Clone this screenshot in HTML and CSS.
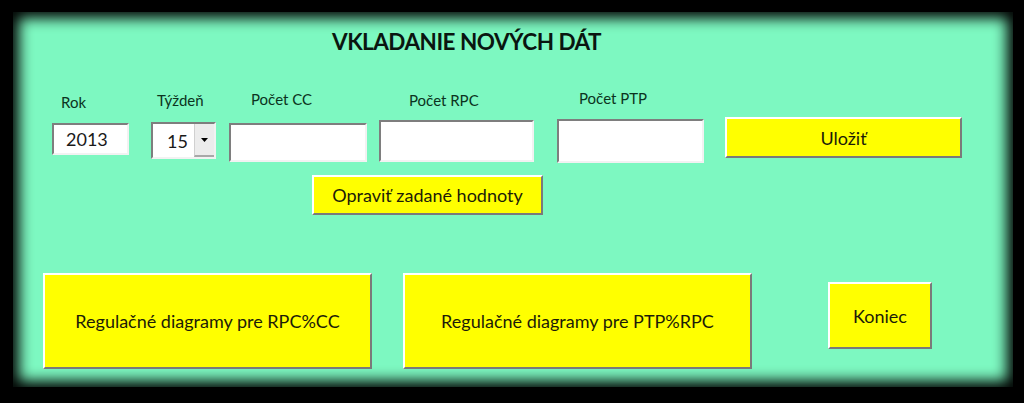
FILE: index.html
```html
<!DOCTYPE html>
<html lang="sk">
<head>
<meta charset="utf-8">
<title>Vkladanie nových dát</title>
<link rel="stylesheet" href="styles.css">
</head>
<body>
<div class="panel">
  <h1 class="title">VKLADANIE NOVÝCH DÁT</h1>

  <div class="fields">
    <div class="field f-rok">
      <span class="label">Rok</span>
      <div class="box">2013</div>
    </div>
    <div class="field f-week">
      <span class="label">Týždeň</span>
      <div class="box combo">
        <span class="combo-value">15</span>
        <span class="combo-btn"><svg width="7" height="4" viewBox="0 0 7 4"><path d="M0 0h7L3.5 4z" fill="#000"/></svg></span>
      </div>
    </div>
    <div class="field f-cc">
      <span class="label">Počet CC</span>
      <div class="box"></div>
    </div>
    <div class="field f-rpc">
      <span class="label">Počet RPC</span>
      <div class="box"></div>
    </div>
    <div class="field f-ptp">
      <span class="label">Počet PTP</span>
      <div class="box"></div>
    </div>
    <button class="btn btn-save">Uložiť</button>
  </div>

  <button class="btn btn-fix">Opraviť zadané hodnoty</button>

  <div class="actions">
    <button class="btn btn-big btn-rpc">Regulačné diagramy pre RPC%CC</button>
    <button class="btn btn-big btn-ptp">Regulačné diagramy pre PTP%RPC</button>
    <button class="btn btn-end">Koniec</button>
  </div>
</div>
</body>
</html>
```

FILE: styles.css
```css
html, body {
  margin: 0;
  padding: 0;
  background: #000;
}

body {
  width: 1024px;
  height: 403px;
  overflow: hidden;
  font-family: Lato, "Open Sans", sans-serif;
}

.panel {
  margin: 12px 11px 0 13px;
  height: 375px;
  background: #7df8c1;
  box-shadow: inset 0 0 14px 6px #000;
  display: flex;
  flex-direction: column;
  align-items: flex-start;
}

.title {
  margin: 17px 0 0 319px;
  font-size: 22.5px;
  line-height: 26px;
  font-weight: 700;
  color: #0a1610;
  letter-spacing: -0.5px;
}

.fields {
  display: flex;
  align-items: flex-start;
  margin: 34px 0 0 39px;
}

.field {
  display: flex;
  flex-direction: column;
  align-items: flex-start;
  margin-top: var(--mt);
  margin-left: var(--ml);
}

.label {
  font-size: 15px;
  line-height: 18px;
  color: #0b3320;
  padding-left: var(--lp);
  margin-bottom: var(--mb);
  white-space: nowrap;
}

.box {
  box-sizing: border-box;
  width: var(--w);
  height: var(--h);
  background: #fff;
  border: 2px solid;
  border-color: #7e7e7e #f2f2f2 #f2f2f2 #7e7e7e;
  font-size: 18px;
  line-height: 26px;
  color: #1a1a1a;
  display: flex;
  align-items: center;
  padding-left: 12px;
}

.f-rok  { --ml: 0;    --mt: 4px; --lp: 9px;  --mb: 12px; --w: 77px;  --h: 32px; }
.f-week { --ml: 22px; --mt: 2px; --lp: 6px;  --mb: 13px; --w: 65px;  --h: 37px; }
.f-cc   { --ml: 13px; --mt: 1px; --lp: 22px; --mb: 15px; --w: 138px; --h: 39px; }
.f-rpc  { --ml: 12px; --mt: 2px; --lp: 30px; --mb: 11px; --w: 155px; --h: 42px; }
.f-ptp  { --ml: 23px; --mt: 0;   --lp: 22px; --mb: 12px; --w: 147px; --h: 44px; }

.combo {
  padding: 0;
  justify-content: flex-end;
}

.combo-value {
  margin-right: 6px;
}

.combo-btn {
  box-sizing: border-box;
  width: 20px;
  align-self: stretch;
  background: #ececec;
  border-left: 1px solid #d0d0d0;
  border-bottom: 2px solid #a8a8a8;
  display: flex;
  align-items: center;
  justify-content: center;
}

.btn {
  box-sizing: border-box;
  background: #ffff00;
  border: 2px solid;
  border-color: #ffffff #7a7a7a #7a7a7a #ffffff;
  font-family: Lato, "Open Sans", sans-serif;
  font-size: 18px;
  color: #1c1c08;
  padding: 0;
  display: flex;
  align-items: center;
  justify-content: center;
  white-space: nowrap;
}

.btn-save {
  width: 237px;
  height: 41px;
  margin: 28px 0 0 21px;
}

.btn-fix {
  width: 231px;
  height: 40px;
  margin: 12px 0 0 299px;
}

.actions {
  display: flex;
  align-items: flex-start;
  margin: 58px 0 0 30px;
}

.btn-big {
  height: 96px;
}

.btn-rpc {
  width: 329px;
}

.btn-ptp {
  width: 349px;
  margin-left: 31px;
}

.btn-end {
  width: 104px;
  height: 67px;
  margin: 9px 0 0 76px;
}
```
